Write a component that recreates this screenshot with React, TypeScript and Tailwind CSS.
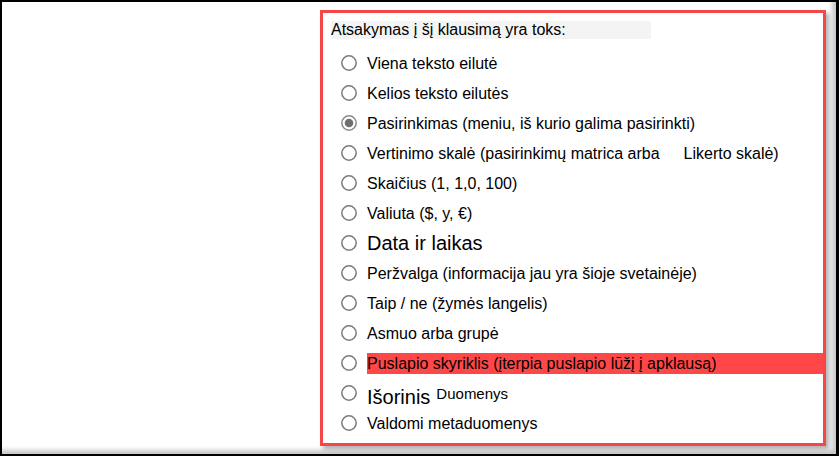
import React from "react";

function Radio({ checked = false }: { checked?: boolean }) {
  return (
    <svg width="16" height="16" viewBox="0 0 16 16" className="shrink-0">
      <circle cx="8" cy="8" r="7.2" fill="#fff" stroke={checked ? "#8a8a8a" : "#7a7a7a"} strokeWidth="1.5" />
      {checked && <circle cx="8" cy="8" r="4.3" fill="#6f6f6f" />}
    </svg>
  );
}

type Opt = { label: React.ReactNode; checked?: boolean; highlight?: boolean };

const options: Opt[] = [
  { label: "Viena teksto eilutė" },
  { label: "Kelios teksto eilutės" },
  { label: "Pasirinkimas (meniu, iš kurio galima pasirinkti)", checked: true },
  {
    label: (
      <>
        Vertinimo skalė (pasirinkimų matrica arba<span className="ml-[24px]">Likerto skalė)</span>
      </>
    ),
  },
  { label: "Skaičius (1, 1,0, 100)" },
  { label: "Valiuta ($, y, €)" },
  { label: <span className="text-[20px]">Data ir laikas</span> },
  { label: "Peržvalga (informacija jau yra šioje svetainėje)" },
  { label: "Taip / ne (žymės langelis)" },
  { label: "Asmuo arba grupė" },
  { label: "Puslapio skyriklis (įterpia puslapio lūžį į apklausą)", highlight: true },
  {
    label: (
      <>
        <span className="text-[20px]">Išorinis</span>
        <span className="ml-[6px] text-[15px] align-[5px]">Duomenys</span>
      </>
    ),
  },
  { label: "Valdomi metaduomenys" },
];

export default function App() {
  return (
    <div
      className="w-[839px] h-[456px] bg-white border-l-2 border-t-2 border-r-[3px] border-b-2 border-black shadow-[inset_-4px_-4px_4px_rgba(0,0,0,0.22)] text-black"
      style={{ fontFamily: '"Liberation Sans", Arial, sans-serif' }}
    >
      <div className="ml-[318px] mt-[8px] w-[506px] h-[436px] border-[3px] border-[#f44848] bg-white shadow-[3px_3px_4px_rgba(0,0,0,0.3)]">
        <div className="ml-[8px] mt-[8px] w-[320px] h-[18px] bg-[#f4f4f4] text-[16px] leading-[18px] whitespace-nowrap">
          Atsakymas į šį klausimą yra toks:
        </div>
        <div className="mt-[9px] flex flex-col">
          {options.map((o, i) => (
            <div key={i} className="h-[30px] flex items-center pl-[18px]">
              <Radio checked={o.checked} />
              <span
                className={
                  "ml-[10px] text-[16px] leading-[21px] h-[21px] whitespace-nowrap flex-1 " +
                  (o.highlight ? "bg-[#ff4747]" : "")
                }
              >
                {o.label}
              </span>
            </div>
          ))}
        </div>
      </div>
    </div>
  );
}
